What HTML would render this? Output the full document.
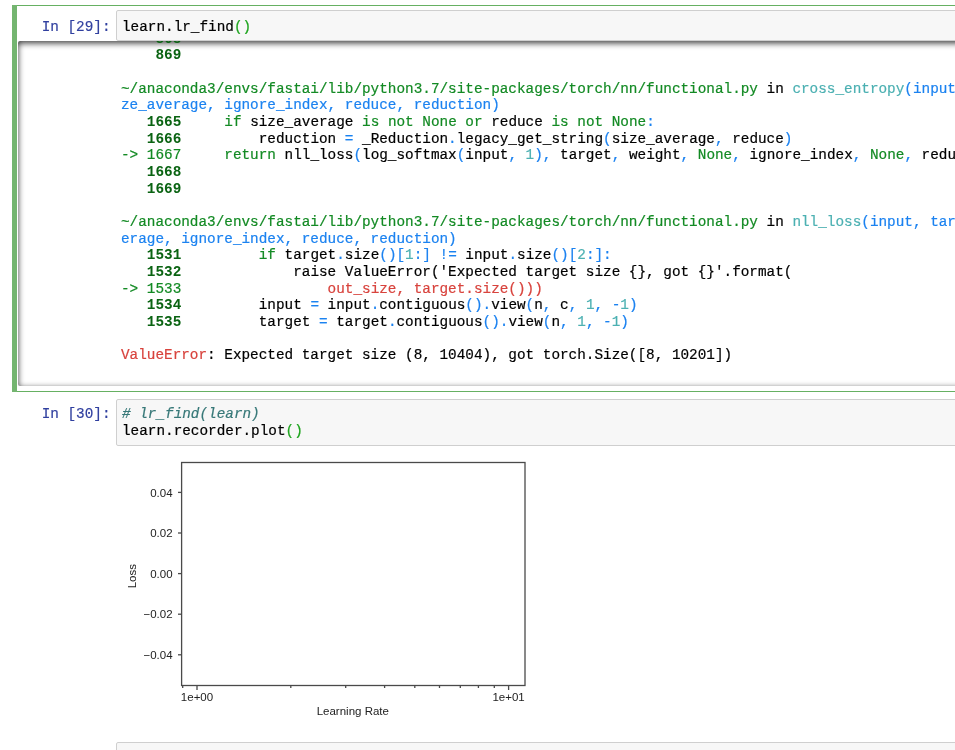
<!DOCTYPE html>
<html><head><meta charset="utf-8">
<style>
html,body{margin:0;padding:0;background:#fff;width:955px;height:750px;overflow:hidden;position:relative}
.wrap{position:absolute;left:0;top:0;width:955px;height:750px;will-change:transform}
.mono{font-family:"Liberation Mono",monospace;font-size:14.35px;line-height:16.67px;white-space:pre;-webkit-text-stroke:0.2px currentColor}
.abs{position:absolute}
.cellborder{position:absolute;left:12px;top:5px;width:1000px;height:385px;border-top:1px solid #66b062;border-bottom:1px solid #66b062}
.cellbar{position:absolute;left:12px;top:5px;width:5px;height:387px;background:#74b570}
.prompt{color:#303F9F;text-align:right}
.inarea{position:absolute;background:#f7f7f7;border:1px solid #cfcfcf;border-radius:2px;width:1000px}
.outscroll{position:absolute;left:18px;top:41px;width:1000px;height:345px;border-radius:2px;box-shadow:inset 0 2px 6px rgba(0,0,0,.8);overflow:hidden}
.g{color:#138a24}
.gb{color:#0a6312;font-weight:bold;-webkit-text-stroke:0}
.c{color:#4cb0b2}
.b{color:#1b82f0}
.r{color:#d8433d}
.k{color:#000}
.br{color:#1fa51f}
.cm{color:#377878;font-style:italic}
.sans{font-family:"Liberation Sans",sans-serif;color:#262626}
</style></head>
<body><div class="wrap">
<!-- cell 29 -->
<div class="cellborder"></div>
<div class="cellbar"></div>
<div class="abs mono prompt" style="left:20px;top:19px;width:90.5px">In [29]:</div>
<div class="inarea" style="left:116px;top:10px;height:29px"></div>
<div class="abs mono" style="left:122px;top:19px">learn.lr_find<span class="br">()</span></div>

<div class="outscroll">
<div class="abs mono" style="left:103px;top:-10.5px"><span class="gb">    868</span>
<span class="gb">    869</span>

<span class="g">~/anaconda3/envs/fastai/lib/python3.7/site-packages/torch/nn/functional.py</span> in <span class="c">cross_entropy</span><span class="b">(input, target, weight, si</span>
<span class="b">ze_average, ignore_index, reduce, reduction)</span>
<span class="gb">   1665</span>     <span class="g">if</span> size_average <span class="g">is</span> <span class="g">not</span> <span class="g">None</span> <span class="g">or</span> reduce <span class="g">is</span> <span class="g">not</span> <span class="g">None</span><span class="b">:</span>
<span class="gb">   1666</span>         reduction <span class="b">=</span> _Reduction<span class="b">.</span>legacy_get_string<span class="b">(</span>size_average<span class="b">,</span> reduce<span class="b">)</span>
<span class="g">-&gt; 1667     return</span> nll_loss<span class="b">(</span>log_softmax<span class="b">(</span>input<span class="b">,</span> <span class="c">1</span><span class="b">),</span> target<span class="b">,</span> weight<span class="b">,</span> <span class="g">None</span><span class="b">,</span> ignore_index<span class="b">,</span> <span class="g">None</span><span class="b">,</span> reduction<span class="b">)</span>
<span class="gb">   1668</span>
<span class="gb">   1669</span>

<span class="g">~/anaconda3/envs/fastai/lib/python3.7/site-packages/torch/nn/functional.py</span> in <span class="c">nll_loss</span><span class="b">(input, target, weight, size_av</span>
<span class="b">erage, ignore_index, reduce, reduction)</span>
<span class="gb">   1531</span>         <span class="g">if</span> target<span class="b">.</span>size<span class="b">()[</span><span class="c">1</span><span class="b">:]</span> <span class="b">!=</span> input<span class="b">.</span>size<span class="b">()[</span><span class="c">2</span><span class="b">:]:</span>
<span class="gb">   1532</span>             raise ValueError('Expected target size {}, got {}'.format(
<span class="g">-&gt; 1533</span>                 <span class="r">out_size, target.size()))</span>
<span class="gb">   1534</span>         input <span class="b">=</span> input<span class="b">.</span>contiguous<span class="b">().</span>view<span class="b">(</span>n<span class="b">,</span> c<span class="b">,</span> <span class="c">1</span><span class="b">,</span> <span class="b">-</span><span class="c">1</span><span class="b">)</span>
<span class="gb">   1535</span>         target <span class="b">=</span> target<span class="b">.</span>contiguous<span class="b">().</span>view<span class="b">(</span>n<span class="b">,</span> <span class="c">1</span><span class="b">,</span> <span class="b">-</span><span class="c">1</span><span class="b">)</span>

<span class="r">ValueError</span>: Expected target size (8, 10404), got torch.Size([8, 10201])
</div>
</div>

<!-- cell 30 -->
<div class="abs mono prompt" style="left:20px;top:406px;width:90.5px">In [30]:</div>
<div class="inarea" style="left:116px;top:399px;height:45px"></div>
<div class="abs mono" style="left:122px;top:406px"><span class="cm"># lr_find(learn)</span>
learn.recorder.plot<span class="br">()</span></div>

<!-- plot -->
<svg class="abs" style="left:0;top:0" width="955" height="750">
 <g stroke="#4a4a4a" stroke-width="1.3" fill="none">
 <rect x="181.6" y="462.5" width="343.4" height="223"/>
 <line x1="182.7" y1="685.5" x2="182.7" y2="688" /><line x1="290.8" y1="685.5" x2="290.8" y2="688" /><line x1="345.7" y1="685.5" x2="345.7" y2="688" /><line x1="384.6" y1="685.5" x2="384.6" y2="688" /><line x1="414.8" y1="685.5" x2="414.8" y2="688" /><line x1="439.5" y1="685.5" x2="439.5" y2="688" /><line x1="460.3" y1="685.5" x2="460.3" y2="688" /><line x1="478.4" y1="685.5" x2="478.4" y2="688" /><line x1="494.3" y1="685.5" x2="494.3" y2="688" /><line x1="197.0" y1="685.5" x2="197.0" y2="690" /><line x1="508.6" y1="685.5" x2="508.6" y2="690" /><line x1="178" y1="492.4" x2="181.7" y2="492.4" /><line x1="178" y1="533.0" x2="181.7" y2="533.0" /><line x1="178" y1="573.6" x2="181.7" y2="573.6" /><line x1="178" y1="614.2" x2="181.7" y2="614.2" /><line x1="178" y1="654.8" x2="181.7" y2="654.8" />
 </g>
 <g font-family="Liberation Sans" font-size="11.5" fill="#222">
 <text x="172.6" y="496.5" text-anchor="end">0.04</text><text x="172.6" y="537.1" text-anchor="end">0.02</text><text x="172.6" y="577.7" text-anchor="end">0.00</text><text x="172.6" y="618.3" text-anchor="end">−0.02</text><text x="172.6" y="658.9" text-anchor="end">−0.04</text><text x="197.0" y="700.8" text-anchor="middle">1e+00</text><text x="508.6" y="700.8" text-anchor="middle">1e+01</text><text x="352.8" y="715.1" text-anchor="middle">Learning Rate</text><text x="0" y="0" text-anchor="middle" transform="translate(136.4 576.2) rotate(-90)">Loss</text>
 </g>
</svg>

<!-- cell 31 -->
<div class="inarea" style="left:116px;top:742px;height:40px"></div>
</div></body></html>
